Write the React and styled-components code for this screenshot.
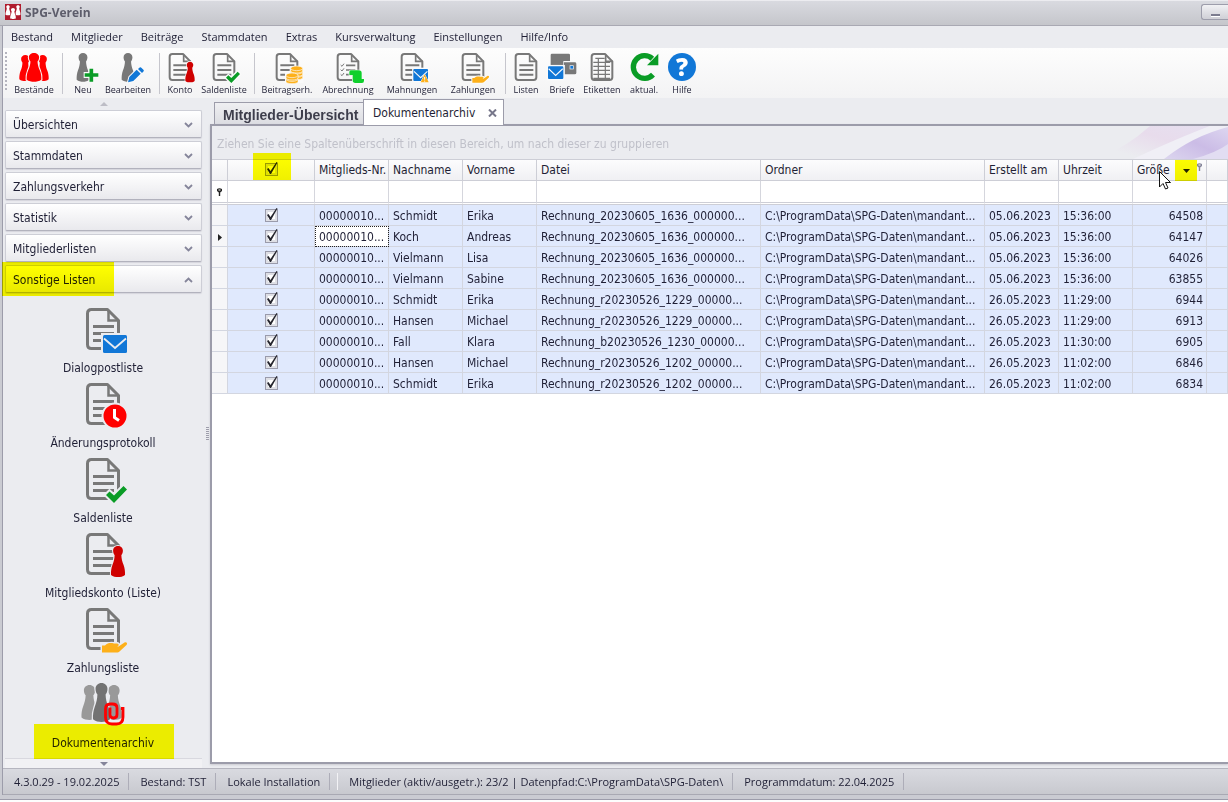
import React, { useState } from 'react';
import styled, { createGlobalStyle, css } from 'styled-components';

const fontUi = "'Open Sans', 'Noto Sans', sans-serif";
const fontGrid = "'DejaVu Sans Condensed', 'Noto Sans', sans-serif";

const GlobalStyle = createGlobalStyle`
  * {
    box-sizing: border-box;
  }

  body {
    margin: 0;
    background: #fdfdfd;
    color: #1f1f35;
    font-family: ${fontGrid};
    font-size: 12px;
  }

  button, input {
    font: inherit;
    color: inherit;
  }
`;

const Window = styled.div`
  display: flex;
  flex-direction: column;
  min-height: calc(100vh - 2px);
  padding: 0 0 4px 2px;
  overflow: hidden;
  background: #cacbd2;
  border-bottom: 1px solid #9c9caa;
`;

const TitleBar = styled.header`
  display: flex;
  align-items: center;
  gap: 4px;
  height: 26px;
  margin-left: -2px;
  padding: 0 0 2px 5px;
  border-top: 1px solid #ececf0;
  border-bottom: 1px solid #a9a9b3;
  background: linear-gradient(#d9dae0, #c5c6cb);
`;

const Title = styled.h1`
  flex: 1;
  margin: 0;
  color: #5d5d6b;
  font-family: ${fontUi};
  font-size: 12px;
  font-weight: 700;
`;

const MinimizeButton = styled.button`
  display: flex;
  align-items: flex-end;
  justify-content: center;
  width: 27px;
  height: 16px;
  padding: 0 0 3px;
  border: 1px solid #9d9dab;
  border-right: none;
  border-radius: 3px 0 0 3px;
  background: linear-gradient(#f1f1f4, #cfcfd6);

  span {
    width: 9px;
    height: 2px;
    background: #7c7c8f;
    box-shadow: 0 1px 0 #fff;
  }
`;

const Body = styled.div`
  display: flex;
  flex: 1;
  flex-direction: column;
  border-left: 1px solid #9c9caa;
  background: #ebecf0;
`;

const MenuBar = styled.nav`
  display: flex;
  align-items: center;
  gap: 18px;
  height: 22px;
  padding: 0 0 2px 8px;
  font-family: ${fontUi};
  font-size: 11px;
`;

const MenuLink = styled.a`
  color: inherit;
  text-decoration: none;
  white-space: nowrap;
`;

const ToolBar = styled.div`
  display: flex;
  height: 50px;
  padding-left: 2px;
  background: linear-gradient(#fdfdfd, #f3f3f4);
`;

const Grip = styled.span`
  width: 2px;
  margin: 4px 2px 8px 0;
  background: repeating-linear-gradient(#b4b4be 0 2px, transparent 2px 4px);
`;

const ToolSeparator = styled.span`
  flex: none;
  width: 1px;
  margin: 5px 3px 4px;
  background: #c6c6cd;
`;

const ToolButton = styled.button`
  display: flex;
  flex: none;
  flex-direction: column;
  align-items: center;
  width: ${props => props.$width}px;
  padding: 3px 0 0;
  border: none;
  background: none;
  font-family: ${fontUi};
  font-size: 9px;
  line-height: 14px;
  white-space: nowrap;
`;

const Main = styled.main`
  display: flex;
  flex: 1;
`;

const Sidebar = styled.aside`
  display: flex;
  flex: none;
  flex-direction: column;
  width: 203px;
  padding: 0 4px 0 2px;
`;

const ScrollStrip = styled.div`
  display: flex;
  align-items: center;
  justify-content: center;
  height: ${props => (props.$down ? 10 : 12)}px;
  margin-top: ${props => (props.$down ? 'auto' : 0)};
  border-top: ${props => (props.$down ? '1px solid #d8d8df' : 'none')};
  background: ${props => (props.$down ? '#f1f1f4' : 'transparent')};
`;

const Accordion = styled.div`
  display: flex;
  flex-direction: column;
  gap: 3px;
`;

const AccordionButton = styled.button`
  position: relative;
  display: flex;
  align-items: center;
  justify-content: space-between;
  height: 28px;
  padding: 2px 8px 0 7px;
  border: 1px solid #cdced6;
  border-bottom-color: #b2b2bd;
  border-radius: 2px;
  background: linear-gradient(#fff, #e9e9ed);
  box-shadow: 0 1px 1px #d5d5dc;
  font-size: 12px;
  text-align: left;
`;

/* marker pen strokes, laid over the content */
const Highlight = styled.span`
  position: absolute;
  background: #ffff00;
  mix-blend-mode: multiply;
  pointer-events: none;
`;

const SectionHighlight = styled(Highlight)`
  top: -4px;
  bottom: -4px;
  left: -4px;
  width: 112px;
`;

const ItemHighlight = styled(Highlight)`
  top: 44px;
  right: 27px;
  bottom: -4px;
  left: 29px;
`;

const CheckHighlight = styled(Highlight)`
  top: -7px;
  bottom: 0;
  left: 25px;
  width: 38px;
`;

const SortHighlight = styled(Highlight)`
  top: 0;
  right: 9px;
  bottom: -1px;
  width: 22px;
`;

const IconList = styled.div`
  display: flex;
  flex-direction: column;
  padding: 12px 1px 3px 0;
`;

const IconItem = styled.button`
  position: relative;
  display: flex;
  flex-direction: column;
  align-items: center;
  height: 75px;
  padding: 0;
  border: none;
  background: none;
  line-height: 30px;
`;

const Splitter = styled.div`
  display: flex;
  flex: none;
  align-items: center;
  width: 4px;

  span {
    width: 3px;
    height: 13px;
    background: repeating-linear-gradient(#9d9daa 0 1px, transparent 1px 2px);
  }
`;

const Content = styled.section`
  display: flex;
  flex: 1;
  flex-direction: column;
  min-width: 0;
  padding: 2px 0 4px;
`;

const TabList = styled.div`
  display: flex;
  align-items: flex-end;
  height: 24px;
  padding-left: 4px;
`;

const Tab = styled.button`
  display: flex;
  align-items: center;
  justify-content: space-between;
  width: 150px;
  height: 22px;
  padding: 2px 4px 0 8px;
  border: 1px solid #9c9caa;
  border-bottom: none;
  background: linear-gradient(#efeff2, #dcdde2);
  color: #3e3e4c;
  font-family: 'Liberation Sans', Arial, sans-serif;
  font-size: 14px;
  font-weight: 700;
  white-space: nowrap;

  ${props => props.$active && css`
    z-index: 1;
    width: 141px;
    height: 26px;
    margin: 0 0 -1px -1px;
    padding: 0 6px 0 9px;
    background: #fff;
    color: #1f1f35;
    font-family: ${fontGrid};
    font-size: 12px;
    font-weight: 400;
  `}
`;

const Panel = styled.div`
  flex: 1;
  overflow: hidden;
  border: 2px solid #9c9caa;
  border-right: none;
  background: #fff;
  box-shadow: 0 1px 2px #c9c9d0;
`;

const GroupPanel = styled.div`
  position: relative;
  height: 33px;
  padding-left: 5px;
  overflow: hidden;
  background: #ebecf0;
  color: #c0c1ca;
  line-height: 37px;
  white-space: nowrap;
`;

const Swoosh = styled.svg`
  position: absolute;
  top: 0;
  right: 0;
`;

const Table = styled.table`
  width: 100%;
  border-collapse: separate;
  border-spacing: 0;
  table-layout: fixed;
`;

const HeadCell = styled.th`
  position: relative;
  height: 22px;
  padding: 0 4px;
  border: 1px solid #cdced6;
  border-left: none;
  background: linear-gradient(#fcfcfd, #f0f0f3);
  font-weight: 400;
  line-height: 18px;
  text-align: ${props => (props.$center ? 'center' : 'left')};
  white-space: nowrap;
`;

const FilterCell = styled.td`
  height: 24px;
  padding: 0;
  border-right: 1px solid #d5d6dd;
  border-bottom: 3px double #cdced6;
  background: #fff;
  text-align: center;
`;

const FilterInput = styled.input`
  display: block;
  width: 100%;
  height: 20px;
  padding: 0 4px;
  border: none;
  outline: none;
  background: transparent;
`;

const Cell = styled.td`
  height: 21px;
  padding: 2px 3px 0 4px;
  overflow: hidden;
  border-right: 1px solid #d3d6e0;
  border-bottom: 1px solid #d3d6e0;
  background: ${props => (props.$indicator ? '#f6f6f8' : '#e0e9fd')};
  line-height: 18px;
  text-align: ${props => props.$align || 'left'};
  white-space: nowrap;

  ${props => props.$focused && css`
    outline: 1px dotted #222;
    outline-offset: -1px;
    background: #fff;
  `}
`;

const CheckLabel = styled.label`
  position: relative;
  display: block;
  width: 13px;
  height: 13px;
  margin: -1px auto 0;

  input {
    display: block;
    width: 13px;
    height: 13px;
    margin: 0;
    appearance: none;
    border: 1px solid #9a9bab;
    background: #fff;
    box-shadow: inset 0 0 0 2px #dfe0e6;
  }

  svg {
    position: absolute;
    top: -1px;
    left: 0;
    pointer-events: none;
  }
`;

const SortGlyph = styled.svg`
  position: absolute;
  top: 9px;
  right: 16px;
`;

const FilterGlyph = styled.span`
  position: absolute;
  top: 3px;
  right: 3px;
  line-height: 0;
`;

const Cursor = styled.svg`
  position: absolute;
  z-index: 2;
  top: 11px;
  left: 26px;
`;

const StatusBar = styled.footer`
  display: flex;
  align-items: center;
  height: 27px;
  border-top: 1px solid #b5b5bf;
  border-bottom: 1px solid #a9a9b3;
  background: linear-gradient(#d9dae0, #c8c9cf);
  font-family: ${fontUi};
  font-size: 11px;
  white-space: nowrap;
`;

const StatusItem = styled.span`
  height: 17px;
  padding: 0 9px 0 11px;
  border-right: 1px solid #adadb8;
  border-left: ${props => (props.$ruled ? '1px solid #f2f2f5' : 'none')};
  margin-left: ${props => (props.$ruled ? 7 : 0)}px;
  line-height: 18px;
`;

/* ---- icon parts, all drawn on a 48 x 48 board ---- */

const GREY = '#787878';

const Doc = ({ lines = true }) => (
  <g fill="none" stroke={GREY} strokeWidth="3">
    <path d="M28.500 4.500H12.500Q8.500 4.500 8.500 8.500V39.500Q8.500 43.500 12.500 43.500H35.500Q39.500 43.500 39.500 39.500V15.500Z" strokeLinejoin="round" />
    <path d="M29.500 5V15.500H40" strokeWidth="2.500" />
    {lines && <path d="M14 21.500H35M14 28.500H35M14 35.500H35" />}
  </g>
);

const Pawn = ({ x = 24, y = 3, h = 43, w = 19, fill = GREY, stroke }) => (
  <path
    transform={`translate(${x} ${y}) scale(${w / 20} ${h / 44})`}
    fill={fill}
    stroke={stroke}
    strokeWidth={stroke ? 3 : 0}
    paintOrder="stroke"
    d="M0 0C4 0 7 3 7 6.500C7 9.500 6 11.500 4.800 13C5 18 6 22 8 27C9.500 31 10.300 36 10 41C7.500 43.500 3 44 0 44S-7.500 43.500-10 41C-10.300 36-9.500 31-8 27C-6 22-5 18-4.800 13C-6 11.500-7 9.500-7 6.500C-7 3-4 0 0 0Z"
  />
);

const Envelope = ({ x = 24, y = 30, w = 24, h = 18, halo }) => (
  <g transform={`translate(${x} ${y}) scale(${w / 24} ${h / 18})`}>
    <rect x="-2" y="-2" width="28" height="22" fill={halo} />
    <rect width="24" height="18" rx="1.500" fill="#1177d7" />
    <path d="M1 3.500L12 13L23 3.500" fill="none" stroke={halo} strokeWidth="1.800" />
  </g>
);

const Tick = ({ halo }) => (
  <path d="M27 40L30.500 36.500L35 40.500L44.500 31L48 34.500L35 48Z" fill="#0a9c26" stroke={halo} strokeWidth="4" paintOrder="stroke" />
);

const Hand = ({ halo }) => (
  <path
    d="M23 40.500H26C29 37.500 32 38 35 38.500H38C40.500 38.500 40 41.500 38 41.500H34.500H39.500L45.500 37.500C47.500 36.500 49 38.500 47.500 40L41 46C40 47 39 47.500 37.500 47.500H23Z"
    fill="#fdb01a"
    stroke={halo}
    strokeWidth="3"
    paintOrder="stroke"
  />
);

const Coin = ({ x, y, halo }) => (
  <g transform={`translate(${x} ${y})`} fill="#fdb01a" stroke={halo} strokeWidth="1">
    <path d="M-9 0V4C-9 8 9 8 9 4V0Z" />
    <ellipse rx="9" ry="3.500" />
  </g>
);

const drawings = {
  members: () => (
    <>
      <Pawn x={11} y={6} h={39} w={18} fill="#ff0000" />
      <Pawn x={37} y={6} h={39} w={18} fill="#ff0000" />
      <Pawn x={24} y={3} w={22} fill="#ff0000" stroke="#fafafa" />
    </>
  ),
  add: halo => (
    <>
      <Pawn />
      <path d="M36.500 25V47M25 36H48" stroke={halo} strokeWidth="9" />
      <path d="M36.500 26.500V46M26.500 36H47" stroke="#0a9c26" strokeWidth="5.500" />
    </>
  ),
  edit: halo => (
    <>
      <Pawn />
      <g fill="#1177d7" stroke={halo} strokeWidth="3" paintOrder="stroke">
        <path d="M24 47L26 39L37 28L43 34L32 45Z" />
        <path d="M39 27L42 24.500Q43 24 44 25L47.500 28.500Q48 29.500 47.500 30.500L45 33Z" strokeWidth="2" />
      </g>
    </>
  ),
  account: halo => (
    <>
      <Doc />
      <Pawn x={39} y={16} h={31} w={14} fill="#cf0000" stroke={halo} />
    </>
  ),
  balance: halo => (
    <>
      <Doc />
      <Tick halo={halo} />
    </>
  ),
  coins: halo => (
    <>
      <Doc />
      <path d="M28 23H49V48H21V32H28Z" fill={halo} />
      <Coin x={38.5} y={36} halo={halo} />
      <Coin x={38.5} y={31} halo={halo} />
      <Coin x={38.5} y={26} halo={halo} />
      <Coin x={31.5} y={42} halo={halo} />
      <Coin x={31.5} y={36.5} halo={halo} />
    </>
  ),
  billing: halo => (
    <>
      <Doc lines={false} />
      <path d="M21 21.500H35M21 28.500H35M21 35.500H35" stroke={GREY} strokeWidth="2.500" />
      <path d="M13 21L15 23L18 19M13 28L15 30L18 26M13 35L15 37L18 33" fill="none" stroke={GREY} strokeWidth="1.500" />
      <path
        d="M28 29H40Q44.500 29 44.500 33V42H48V44.500Q48 48 45 48H35Q31 48 31 44V36H26V32Q26 29 28 29Z"
        fill="#0fcf2c"
        stroke={halo}
        strokeWidth="2"
        paintOrder="stroke"
      />
    </>
  ),
  dunning: halo => (
    <>
      <Doc />
      <Envelope x={26} y={27} w={22} h={18} halo={halo} />
      <path d="M43 35L49 47H37Z" fill="#fdb01a" stroke={halo} strokeWidth="1.500" paintOrder="stroke" />
      <path d="M43 39V43M43 44.500V46" stroke="#fff" strokeWidth="1.500" />
    </>
  ),
  payments: halo => (
    <>
      <Doc />
      <Hand halo={halo} />
    </>
  ),
  lists: () => <Doc />,
  letters: halo => (
    <>
      <path d="M9 4H34Q36 4 36 6V15H26V21H7V6Q7 4 9 4Z" fill={GREY} />
      <path d="M27 17H43Q45.500 17 45.500 19V33Q45.500 35 43 35H28V21H27Z" fill={GREY} />
      <rect x="36" y="22" width="5" height="5" fill="#1177d7" stroke={halo} />
      <Envelope x={3} y={23} w={23} h={19} halo={halo} />
    </>
  ),
  labels: () => (
    <>
      <Doc lines={false} />
      <path d="M14 11H28M11 17H36M11 23H36M11 29H36M11 35H36M11 41H36M18.500 11V41M29 17V41" stroke={GREY} strokeWidth="1.800" />
    </>
  ),
  refresh: () => (
    <>
      <path d="M37.500 35.500A17 17 0 1 1 36.500 11.500" fill="none" stroke="#0a9c26" strokeWidth="8" />
      <path d="M45.500 4V21.500H28.500Z" fill="#0a9c26" />
    </>
  ),
  help: () => (
    <>
      <circle cx="24" cy="24" r="21" fill="#1177d7" />
      <text x="24" y="37" fill="#fff" fontFamily="Open Sans, sans-serif" fontSize="36" fontWeight="800" textAnchor="middle">?</text>
    </>
  ),
  mail: halo => (
    <>
      <Doc />
      <Envelope halo={halo} />
    </>
  ),
  history: halo => (
    <>
      <Doc />
      <circle cx="36" cy="36" r="12.500" fill="#ff0000" stroke={halo} strokeWidth="2" />
      <path d="M35.500 29V37.500L40 40.500" fill="none" stroke="#fff" strokeWidth="3" />
    </>
  ),
  archive: halo => (
    <>
      <Pawn x={10.5} y={5} h={35} w={16} fill="#999" />
      <Pawn x={35} y={5} h={35} w={16} fill="#999" />
      <Pawn x={22.5} y={3} h={39} w={17} fill="#737373" stroke={halo} />
      <path
        d="M31 27.500V34.500Q31 38 34.500 38T38 34.500V28Q38 24 33.500 24H31.500Q26.500 24 26.500 29V37Q26.500 44 33 44H37.500Q44 44 44 37V28.500H42"
        fill="none"
        stroke="#ff0000"
        strokeWidth="2.800"
      />
    </>
  ),
};

const Icon = ({ name, size = 32, halo = '#fafafa' }) => (
  <svg width={size} height={size} viewBox="0 0 48 48" overflow="visible" aria-hidden="true">
    {drawings[name](halo)}
  </svg>
);

const Chevron = ({ up }) => (
  <svg width="9" height="7" viewBox="0 0 9 7" fill="none" stroke="#85859a" strokeWidth="1.800" aria-hidden="true">
    <path d={up ? 'M1 5L4.500 1.500L8 5' : 'M1 1L4.500 4.500L8 1'} />
  </svg>
);

const Triangle = ({ up }) => (
  <svg width="8" height="4" viewBox="0 0 8 4" aria-hidden="true">
    <path d={up ? 'M0 4L4 0L8 4Z' : 'M0 0H8L4 4Z'} fill={up ? '#bdbdc6' : '#85859a'} />
  </svg>
);

const Funnel = ({ color }) => (
  <svg width="7" height="8" viewBox="0 0 7 8" aria-hidden="true">
    <path d="M1 1Q3.500 -0.500 6 1V3L4.200 4.500V8H2.800V4.500L1 3Z" fill={color} />
    <path d="M2.500 2H4.500" stroke="#fff" />
  </svg>
);

const CheckBox = ({ label, checked, onChange }) => (
  <CheckLabel>
    <input type="checkbox" aria-label={label} checked={checked} onChange={onChange} />
    {checked && (
      <svg width="13" height="13" viewBox="0 0 13 13" aria-hidden="true">
        <path d="M2 7L3.500 6L5.500 9L11.500 0L12.500 0.500L6 12H5Z" fill="#26262e" />
      </svg>
    )}
  </CheckLabel>
);

const menu = ['Bestand', 'Mitglieder', 'Beiträge', 'Stammdaten', 'Extras', 'Kursverwaltung', 'Einstellungen', 'Hilfe/Info'];

const toolGroups = [
  [
    { icon: 'members', label: 'Bestände', width: 50 },
  ],
  [
    { icon: 'add', label: 'Neu', width: 34 },
    { icon: 'edit', label: 'Bearbeiten', width: 56 },
  ],
  [
    { icon: 'account', label: 'Konto', width: 34 },
    { icon: 'balance', label: 'Saldenliste', width: 54 },
  ],
  [
    { icon: 'coins', label: 'Beitragserh.', width: 58 },
    { icon: 'billing', label: 'Abrechnung', width: 64 },
    { icon: 'dunning', label: 'Mahnungen', width: 64 },
    { icon: 'payments', label: 'Zahlungen', width: 58 },
  ],
  [
    { icon: 'lists', label: 'Listen', width: 34 },
    { icon: 'letters', label: 'Briefe', width: 38 },
    { icon: 'labels', label: 'Etiketten', width: 42 },
    { icon: 'refresh', label: 'aktual.', width: 42 },
    { icon: 'help', label: 'Hilfe', width: 34 },
  ],
];

const sections = ['Übersichten', 'Stammdaten', 'Zahlungsverkehr', 'Statistik', 'Mitgliederlisten', 'Sonstige Listen'];

const listItems = [
  { icon: 'mail', label: 'Dialogpostliste' },
  { icon: 'history', label: 'Änderungsprotokoll' },
  { icon: 'balance', label: 'Saldenliste' },
  { icon: 'account', label: 'Mitgliedskonto (Liste)' },
  { icon: 'payments', label: 'Zahlungsliste' },
  { icon: 'archive', label: 'Dokumentenarchiv', marked: true },
];

const columnWidths = [16, 87, 74, 74, 74, 224, 224, 74, 74, 74];
const columns = ['Mitglieds-Nr.', 'Nachname', 'Vorname', 'Datei', 'Ordner', 'Erstellt am', 'Uhrzeit'];
const folder = 'C:\\ProgramData\\SPG-Daten\\mandant...';

const documents = [
  ['Schmidt', 'Erika', 'Rechnung_20230605_1636_000000...', '05.06.2023', '15:36:00', 64508],
  ['Koch', 'Andreas', 'Rechnung_20230605_1636_000000...', '05.06.2023', '15:36:00', 64147],
  ['Vielmann', 'Lisa', 'Rechnung_20230605_1636_000000...', '05.06.2023', '15:36:00', 64026],
  ['Vielmann', 'Sabine', 'Rechnung_20230605_1636_000000...', '05.06.2023', '15:36:00', 63855],
  ['Schmidt', 'Erika', 'Rechnung_r20230526_1229_00000...', '26.05.2023', '11:29:00', 6944],
  ['Hansen', 'Michael', 'Rechnung_r20230526_1229_00000...', '26.05.2023', '11:29:00', 6913],
  ['Fall', 'Klara', 'Rechnung_b20230526_1230_00000...', '26.05.2023', '11:30:00', 6905],
  ['Hansen', 'Michael', 'Rechnung_r20230526_1202_00000...', '26.05.2023', '11:02:00', 6846],
  ['Schmidt', 'Erika', 'Rechnung_r20230526_1202_00000...', '26.05.2023', '11:02:00', 6834],
];

const DocumentTable = () => {
  const [checked, setChecked] = useState(documents.map(() => true));
  const [focused, setFocused] = useState(1);
  const allChecked = checked.every(Boolean);

  const toggleAll = () => setChecked(checked.map(() => !allChecked));
  const toggleRow = (index) => setChecked(checked.map((value, i) => (i === index ? !value : value)));

  return (
    <Table>
      <colgroup>
        {columnWidths.map((width, i) => <col key={i} width={width} />)}
        <col />
      </colgroup>
      <thead>
        <tr>
          <HeadCell />
          <HeadCell $center>
            <CheckBox label="Alle auswählen" checked={allChecked} onChange={toggleAll} />
            <CheckHighlight />
          </HeadCell>
          {columns.map(name => <HeadCell key={name}>{name}</HeadCell>)}
          <HeadCell>
            Größe
            <SortGlyph width="7" height="4" viewBox="0 0 7 4">
              <path d="M0 0H7L3.500 4Z" fill="#222" />
            </SortGlyph>
            <FilterGlyph><Funnel color="#85859a" /></FilterGlyph>
            <SortHighlight />
            <Cursor width="12" height="19" viewBox="0 0 12 19">
              <path d="M0.500 0.500V16L4 12.500L6.500 18L9 17L6.500 11.500H11.500Z" fill="#fff" stroke="#111" />
            </Cursor>
          </HeadCell>
          <HeadCell />
        </tr>
      </thead>
      <tbody>
        <tr>
          <FilterCell><Funnel color="#222" /></FilterCell>
          <FilterCell />
          {[...columns, 'Größe'].map(name => (
            <FilterCell key={name}>
              <FilterInput type="text" aria-label={`Filter ${name}`} />
            </FilterCell>
          ))}
          <FilterCell />
        </tr>
        {documents.map(([lastName, firstName, file, date, time, size], i) => (
          <tr key={i} onClick={() => setFocused(i)}>
            <Cell $indicator $align="center">
              {focused === i && (
                <svg width="4" height="7" viewBox="0 0 4 7" aria-hidden="true">
                  <path d="M0 0L4 3.500L0 7Z" fill="#222" />
                </svg>
              )}
            </Cell>
            <Cell $align="center">
              <CheckBox label={`${firstName} ${lastName}`} checked={checked[i]} onChange={() => toggleRow(i)} />
            </Cell>
            <Cell $focused={focused === i}>00000010...</Cell>
            <Cell>{lastName}</Cell>
            <Cell>{firstName}</Cell>
            <Cell>{file}</Cell>
            <Cell>{folder}</Cell>
            <Cell>{date}</Cell>
            <Cell>{time}</Cell>
            <Cell $align="right">{size}</Cell>
            <Cell />
          </tr>
        ))}
      </tbody>
    </Table>
  );
};

const App = () => (
  <>
    <GlobalStyle />
    <Window>
      <TitleBar>
        <svg width="16" height="16" viewBox="0 0 48 48" aria-hidden="true">
          <rect width="48" height="48" fill="#b01c2e" />
          <Pawn x={9} y={4} h={30} w={15} fill="#fff" />
          <Pawn x={39} y={4} h={30} w={15} fill="#fff" />
          <Pawn x={24} y={12} h={33} w={17} fill="#fff" stroke="#b01c2e" />
        </svg>
        <Title>SPG-Verein</Title>
        <MinimizeButton aria-label="Minimieren"><span /></MinimizeButton>
      </TitleBar>

      <Body>
        <MenuBar>
          {menu.map(name => <MenuLink key={name} href="#">{name}</MenuLink>)}
        </MenuBar>

        <ToolBar>
          <Grip />
          {toolGroups.map((group, i) => (
            <React.Fragment key={i}>
              {i > 0 && <ToolSeparator />}
              {group.map(tool => (
                <ToolButton key={tool.label} $width={tool.width}>
                  <Icon name={tool.icon} />
                  {tool.label}
                </ToolButton>
              ))}
            </React.Fragment>
          ))}
        </ToolBar>

        <Main>
          <Sidebar>
            <ScrollStrip><Triangle up /></ScrollStrip>
            <Accordion>
              {sections.map((name, i) => {
                const open = i === sections.length - 1;
                return (
                  <AccordionButton key={name} aria-expanded={open}>
                    {name}
                    <Chevron up={open} />
                    {open && <SectionHighlight />}
                  </AccordionButton>
                );
              })}
            </Accordion>
            <IconList>
              {listItems.map(item => (
                <IconItem key={item.label}>
                  <Icon name={item.icon} size={48} halo="#ebecf0" />
                  {item.label}
                  {item.marked && <ItemHighlight />}
                </IconItem>
              ))}
            </IconList>
            <ScrollStrip $down><Triangle /></ScrollStrip>
          </Sidebar>

          <Splitter><span /></Splitter>

          <Content>
            <TabList role="tablist">
              <Tab role="tab">Mitglieder-Übersicht</Tab>
              <Tab role="tab" aria-selected="true" $active>
                Dokumentenarchiv
                <svg width="9" height="8" viewBox="0 0 9 8" stroke="#77778a" strokeWidth="2" aria-hidden="true">
                  <path d="M1 0.500L8 7.500M8 0.500L1 7.500" />
                </svg>
              </Tab>
            </TabList>
            <Panel>
              <GroupPanel>
                Ziehen Sie eine Spaltenüberschrift in diesen Bereich, um nach dieser zu gruppieren
                <Swoosh width="130" height="33" viewBox="0 0 130 33" aria-hidden="true">
                  <defs>
                    <linearGradient id="pink" x1="0" x2="1" y1="1" y2="0">
                      <stop offset="0.2" stopColor="#ebecf0" />
                      <stop offset="0.6" stopColor="#e8dcec" />
                      <stop offset="1" stopColor="#e6e0f0" />
                    </linearGradient>
                    <linearGradient id="violet" x1="0" x2="1" y1="1" y2="0">
                      <stop offset="0" stopColor="#dcd6ef" />
                      <stop offset="0.5" stopColor="#cbbce6" />
                      <stop offset="1" stopColor="#ddd6f0" />
                    </linearGradient>
                  </defs>
                  <path d="M0 33Q30 20 52 0H112Q82 12 50 33Z" fill="url(#pink)" />
                  <path d="M35 33Q80 12 112 0H130V3Q95 12 66 33Z" fill="#f0eff6" />
                  <path d="M66 33Q95 10 130 1V33Z" fill="url(#violet)" />
                  <path d="M95 33Q118 27 130 18V33Z" fill="#e2ddf2" />
                </Swoosh>
              </GroupPanel>
              <DocumentTable />
            </Panel>
          </Content>
        </Main>

        <StatusBar>
          <StatusItem>4.3.0.29 - 19.02.2025</StatusItem>
          <StatusItem>Bestand: TST</StatusItem>
          <StatusItem>Lokale Installation</StatusItem>
          <StatusItem $ruled>Mitglieder (aktiv/ausgetr.): 23/2 | Datenpfad:C:\ProgramData\SPG-Daten\</StatusItem>
          <StatusItem>Programmdatum: 22.04.2025</StatusItem>
        </StatusBar>
      </Body>
    </Window>
  </>
);

export default App;
